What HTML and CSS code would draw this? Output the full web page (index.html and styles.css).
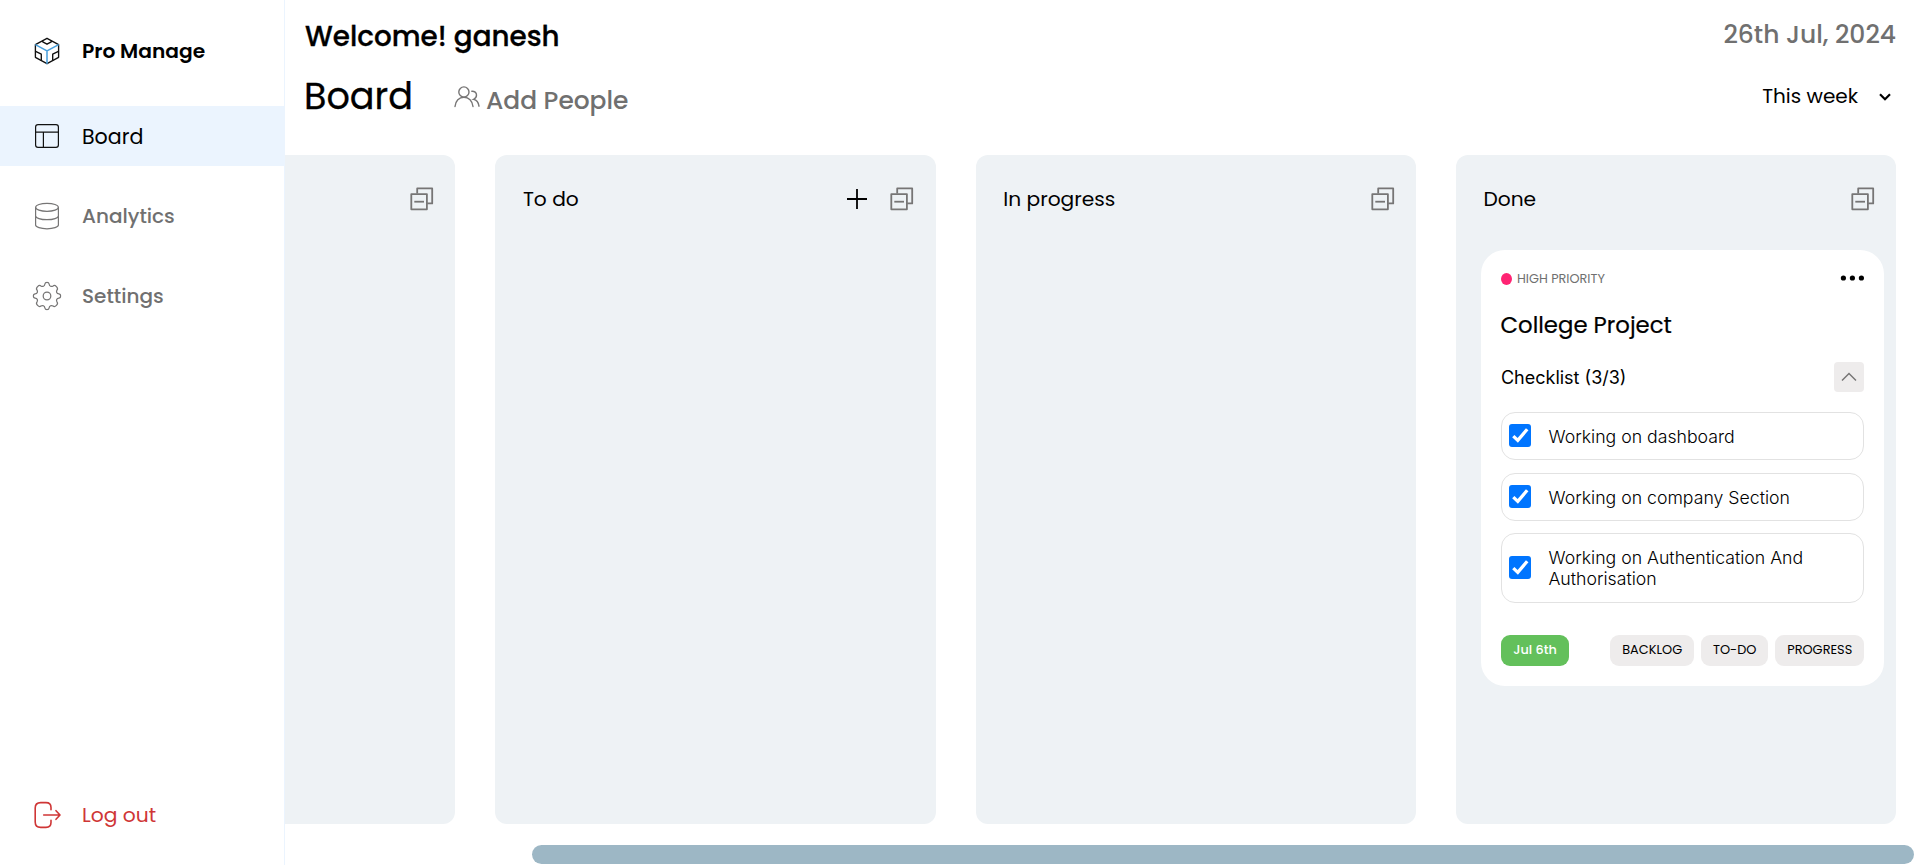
FILE: index.html
```html
<!DOCTYPE html>
<html lang="en">
<head>
<meta charset="utf-8">
<title>Pro Manage</title>
<link rel="stylesheet" href="styles.css">
</head>
<body>
<svg class="defs" aria-hidden="true">
  <symbol id="collapse" viewBox="0 0 24 24">
    <g fill="none" stroke="#767575" stroke-width="1.8" stroke-linejoin="round">
      <path d="M7.2 6.5V1.4H22.2V16.4H17.2"/>
      <rect x="1.3" y="7.1" width="15.6" height="15.2"/>
      <path d="M4.3 14.7H14"/>
    </g>
  </symbol>
</svg>
<div class="app">
  <aside class="sidebar">
    <div class="brand">
      <svg class="icon" viewBox="0 0 30 30" fill="none" stroke-width="1.35" stroke-linejoin="round" stroke-linecap="round">
        <path stroke="#111" d="M15 2.3 26.6 8.6V21.3L15 27.7 3.4 21.3V8.6Z"/>
        <path stroke="#111" d="M10.7 4.9V5.8L15 8.2 19.3 5.8V4.9M3.6 15.3 9.3 18.2V24.4M26.4 15.3 20.7 18.2V24.4"/>
        <path stroke="#479fdd" stroke-width="1.5" d="M3.8 8.8 15 14.9 26.2 8.8M15 14.9V27.4"/>
      </svg>
      <span class="brand-name">Pro Manage</span>
    </div>
    <nav class="nav">
      <a class="nav-item active">
        <svg class="icon" viewBox="0 0 30 30" fill="none" stroke="#111" stroke-width="1.2">
          <rect x="3.6" y="3.6" width="22.8" height="22.8" rx="2.4"/><path d="M3.6 11.2H26.4M11.4 11.2V26.4"/>
        </svg>
        <span>Board</span>
      </a>
      <a class="nav-item">
        <svg class="icon" viewBox="0 0 30 30" fill="none" stroke="#767575" stroke-width="1.2">
          <ellipse cx="15" cy="6.3" rx="11.4" ry="4"/><path d="M3.6 6.3V24C3.6 26.1 8.7 27.8 15 27.8S26.4 26.1 26.4 24V6.3M3.6 14.7C3.6 17 8.7 18.7 15 18.7S26.4 17 26.4 14.7"/>
        </svg>
        <span>Analytics</span>
      </a>
      <a class="nav-item">
        <svg class="icon" viewBox="0 0 30 30" fill="none" stroke="#767575" stroke-width="1.25" stroke-linejoin="round">
          <circle cx="15" cy="15" r="3.8"/>
          <path d="M12.9 3C13.2 .8 16.8 .8 17.1 3C17.4 5.4 19.4 6.1 21.1 4.9C23.1 3.4 26.6 6.9 25.1 8.9C23.9 10.6 24.6 12.6 27 12.9C29.2 13.2 29.2 16.8 27 17.1C24.6 17.4 23.9 19.4 25.1 21.1C26.6 23.1 23.1 26.6 21.1 25.1C19.4 23.9 17.4 24.6 17.1 27C16.8 29.2 13.2 29.2 12.9 27C12.6 24.6 10.6 23.9 8.9 25.1C6.9 26.6 3.4 23.1 4.9 21.1C6.1 19.4 5.4 17.4 3 17.1C.8 16.8 .8 13.2 3 12.9C5.4 12.6 6.1 10.6 4.9 8.9C3.4 6.9 6.9 3.4 8.9 4.9C10.6 6.1 12.6 5.4 12.9 3Z"/>
        </svg>
        <span>Settings</span>
      </a>
    </nav>
    <a class="nav-item logout">
      <svg class="icon" viewBox="0 0 30 30" fill="none" stroke="#cf3636" stroke-width="1.6" stroke-linecap="round" stroke-linejoin="round">
        <path d="M19 9.8V7.5C19 4.2 17.3 2.6 14 2.6H8.7C5.4 2.6 3.2 4.6 3.2 8V22C3.2 25.4 5.4 27.4 8.7 27.4H14C17.3 27.4 19 25.8 19 22.5V20.2"/>
        <path d="M11.7 15H27.5M24 10.7 28 15 24 19.3"/>
      </svg>
      <span>Log out</span>
    </a>
  </aside>

  <main class="main">
    <header class="topbar">
      <h2 class="welcome">Welcome! ganesh</h2>
      <span class="date">26th Jul, 2024</span>
    </header>
    <div class="toolbar">
      <h1 class="title">Board</h1>
      <button class="people">
        <svg class="people-icon" viewBox="0 0 26 22" fill="none" stroke="#767575" stroke-width="1.4" stroke-linecap="round">
          <circle cx="9.9" cy="6" r="5.1"/>
          <path d="M1 20.5C1.5 15 5 11.2 9.9 11.2S18.4 15 19 20.5M17.8 5.2C20.5 5 22.5 6.6 22.5 9.1C22.5 11.2 21.2 12.7 19.6 13.3C22.8 14 24.5 16.5 25 20.2"/>
        </svg>
        <span class="people-label">Add People</span>
      </button>
      <div class="range">
        <span class="range-label">This week</span>
        <svg class="range-icon" viewBox="0 0 12 8" fill="none" stroke="#000" stroke-width="2.2"><path d="M1 1.2 6 6.2 11 1.2"/></svg>
      </div>
    </div>

    <div class="board">
      <section class="column">
        <div class="column-head"><span></span><svg class="collapse"><use href="#collapse"/></svg></div>
      </section>
      <section class="column">
        <div class="column-head">
          <span>To do</span>
          <svg class="plus" viewBox="0 0 20 20" stroke="#000" stroke-width="1.8"><path d="M0 10H20M10 0V20"/></svg>
          <svg class="collapse"><use href="#collapse"/></svg>
        </div>
      </section>
      <section class="column">
        <div class="column-head"><span>In progress</span><svg class="collapse"><use href="#collapse"/></svg></div>
      </section>
      <section class="column">
        <div class="column-head"><span>Done</span><svg class="collapse"><use href="#collapse"/></svg></div>
        <article class="card">
          <div class="card-top">
            <i class="dot"></i>
            <span class="priority">HIGH PRIORITY</span>
            <svg class="more" viewBox="0 0 24 6"><circle cx="3.4" cy="3" r="2.6"/><circle cx="12.4" cy="3" r="2.6"/><circle cx="21.4" cy="3" r="2.6"/></svg>
          </div>
          <h3 class="card-title">College Project</h3>
          <div class="checklist-head">
            <span class="checklist-label">Checklist (3/3)</span>
            <button class="toggle"><svg viewBox="0 0 16 10" fill="none" stroke="#767575" stroke-width="1.4"><path d="M1 8.6 8 1.4 15 8.6"/></svg></button>
          </div>
          <ul class="tasks">
            <li class="task"><svg class="check" viewBox="0 0 22 22"><path d="M4.2 11.8 8.6 16 17.8 5.1"/></svg><span>Working on dashboard</span></li>
            <li class="task"><svg class="check" viewBox="0 0 22 22"><path d="M4.2 11.8 8.6 16 17.8 5.1"/></svg><span>Working on company Section</span></li>
            <li class="task tall"><svg class="check" viewBox="0 0 22 22"><path d="M4.2 11.8 8.6 16 17.8 5.1"/></svg><span>Working on Authentication And Authorisation</span></li>
          </ul>
          <div class="card-foot">
            <span class="chip due">Jul 6th</span>
            <span class="chip backlog">BACKLOG</span>
            <span class="chip todo">TO-DO</span>
            <span class="chip progress">PROGRESS</span>
          </div>
        </article>
      </section>
    </div>
    <div class="scrollbar"><div class="thumb"></div></div>
  </main>
</div>
</body>
</html>
```

FILE: styles.css
```css
* { box-sizing: border-box; margin: 0; padding: 0; }
body {
  height: 865px;
  overflow: hidden;
  background: #fff;
  color: #000;
  font-family: Poppins, Inter, sans-serif;
  font-size: 20px;
  white-space: nowrap;
}
button { border: 0; background: none; font: inherit; color: inherit; }
svg { display: block; flex: none; }
.defs { position: absolute; width: 0; height: 0; }
.app { display: flex; height: 865px; }

.sidebar {
  display: flex;
  flex-direction: column;
  flex: none;
  width: 285px;
  border-right: 1px solid #ebf4fe;
}
.icon { width: 30px; height: 30px; }
.brand { display: flex; align-items: center; gap: 20px; height: 60px; margin-top: 21px; padding-left: 32px; }
.brand-name { font-weight: 600; font-size: 20.2px; }
.nav { display: flex; flex-direction: column; gap: 20px; margin-top: 25px; }
.nav-item { display: flex; align-items: center; gap: 20px; height: 60px; padding-left: 32px; color: #707070; font-size: 20.3px; }
.nav-item.active { background: #ebf4fe; color: #000; }
.nav-item:not(.logout) span { font-weight: 500; font-size: 20px; }
.nav-item.active span { font-weight: 400; font-size: 20.6px; }
.logout { margin-top: auto; margin-bottom: 20px; color: #cf3636; }

.main { display: flex; flex-direction: column; flex: 1; min-width: 0; }
.topbar { display: flex; justify-content: space-between; height: 72px; padding: 0 19px 0 20px; }
.welcome { font-size: 27.8px; font-weight: 500; line-height: 73px; -webkit-text-stroke: 0.3px #000; }
.date { font-size: 25px; font-weight: 500; line-height: 70px; color: #707070; }
.toolbar { display: flex; height: 83px; padding: 0 24px 0 20px; }
.title { width: 149px; margin-left: -1px; margin-right: 1px; font-size: 36.6px; font-weight: 400; line-height: 49px; -webkit-text-stroke: 0.3px #000; }
.people { display: flex; gap: 6px; height: 58px; color: #707070; }
.people-icon { width: 26px; height: 22px; margin-top: 14px; }
.people-label { font-size: 24.9px; font-weight: 500; line-height: 58px; }
.range { display: flex; gap: 21px; align-items: center; height: 48px; margin-left: auto; }
.range-icon { width: 12px; height: 8px; margin-top: 2px; }
.range-label { font-size: 20px; }

.board { display: flex; justify-content: flex-end; gap: 40px; height: 669px; padding-right: 18.8px; overflow: hidden; }
.column { flex: none; width: 440.25px; padding: 0 12px 0 25px; border-radius: 12px; background: #eef2f5; }
.column-head { display: flex; align-items: center; height: 88px; padding: 0 9.3px 0 2.5px; font-size: 20.2px; }
.column-head span { margin-right: auto; }
.collapse { width: 24px; height: 24px; }
.plus { width: 20px; height: 20px; margin-right: 23px; }
.scrollbar { margin-top: 21px; height: 19px; display: flex; justify-content: flex-end; padding-right: 1px; }
.thumb { width: 1382px; height: 19px; border-radius: 10px; background: #9db7c5; }

.card { height: 436px; margin-top: 7px; padding: 20px; border-radius: 24px; background: #fff; }
.card-top { display: flex; align-items: center; height: 17px; }
.dot { width: 11px; height: 12px; margin-right: 5px; border-radius: 50%; background: #ff2473; }
.priority { font-size: 12.8px; color: #707070; }
.more { width: 24px; height: 6px; margin-left: auto; margin-top: -1px; }
.card-title { margin-top: 18px; font-size: 22.8px; font-weight: 400; line-height: 40px; margin-left: -0.5px; -webkit-text-stroke: 0.2px #000; }
.checklist-head { display: flex; align-items: center; justify-content: space-between; height: 30px; margin-top: 17px; }
.checklist-label { font-size: 18px; }
.toggle { display: flex; align-items: center; justify-content: center; width: 30px; height: 30px; border-radius: 4px; background: #eeecec; }
.toggle svg { width: 16px; height: 10px; }
.checklist-head, .task { font-family: Inter, sans-serif; }
.tasks { display: flex; flex-direction: column; gap: 13px; margin-top: 20px; list-style: none; }
.task { display: flex; align-items: center; gap: 17px; height: 48px; padding: 0 30px 0 7px; border: 1px solid #e2e2e2; border-radius: 14px; font-size: 17.7px; font-weight: 300; line-height: 21px; white-space: normal; }
.task.tall { height: 70px; margin-top: -1px; }
.check { width: 22.5px; height: 22.5px; margin-top: -1px; border-radius: 3px; background: #0075ff; fill: none; stroke: #fff; stroke-width: 3.2; }
.card-foot { display: flex; gap: 7px; margin-top: 32px; }
.chip { display: flex; align-items: center; justify-content: center; height: 31px; padding-bottom: 1px; border-radius: 9px; background: #eeecec; font-size: 12.9px; }
.due { width: 68px; margin-right: auto; background: #63c05b; color: #fff; font-size: 12.8px; font-weight: 500; }
.backlog { width: 84px; }
.todo { width: 67px; }
.progress { width: 89px; }
```
